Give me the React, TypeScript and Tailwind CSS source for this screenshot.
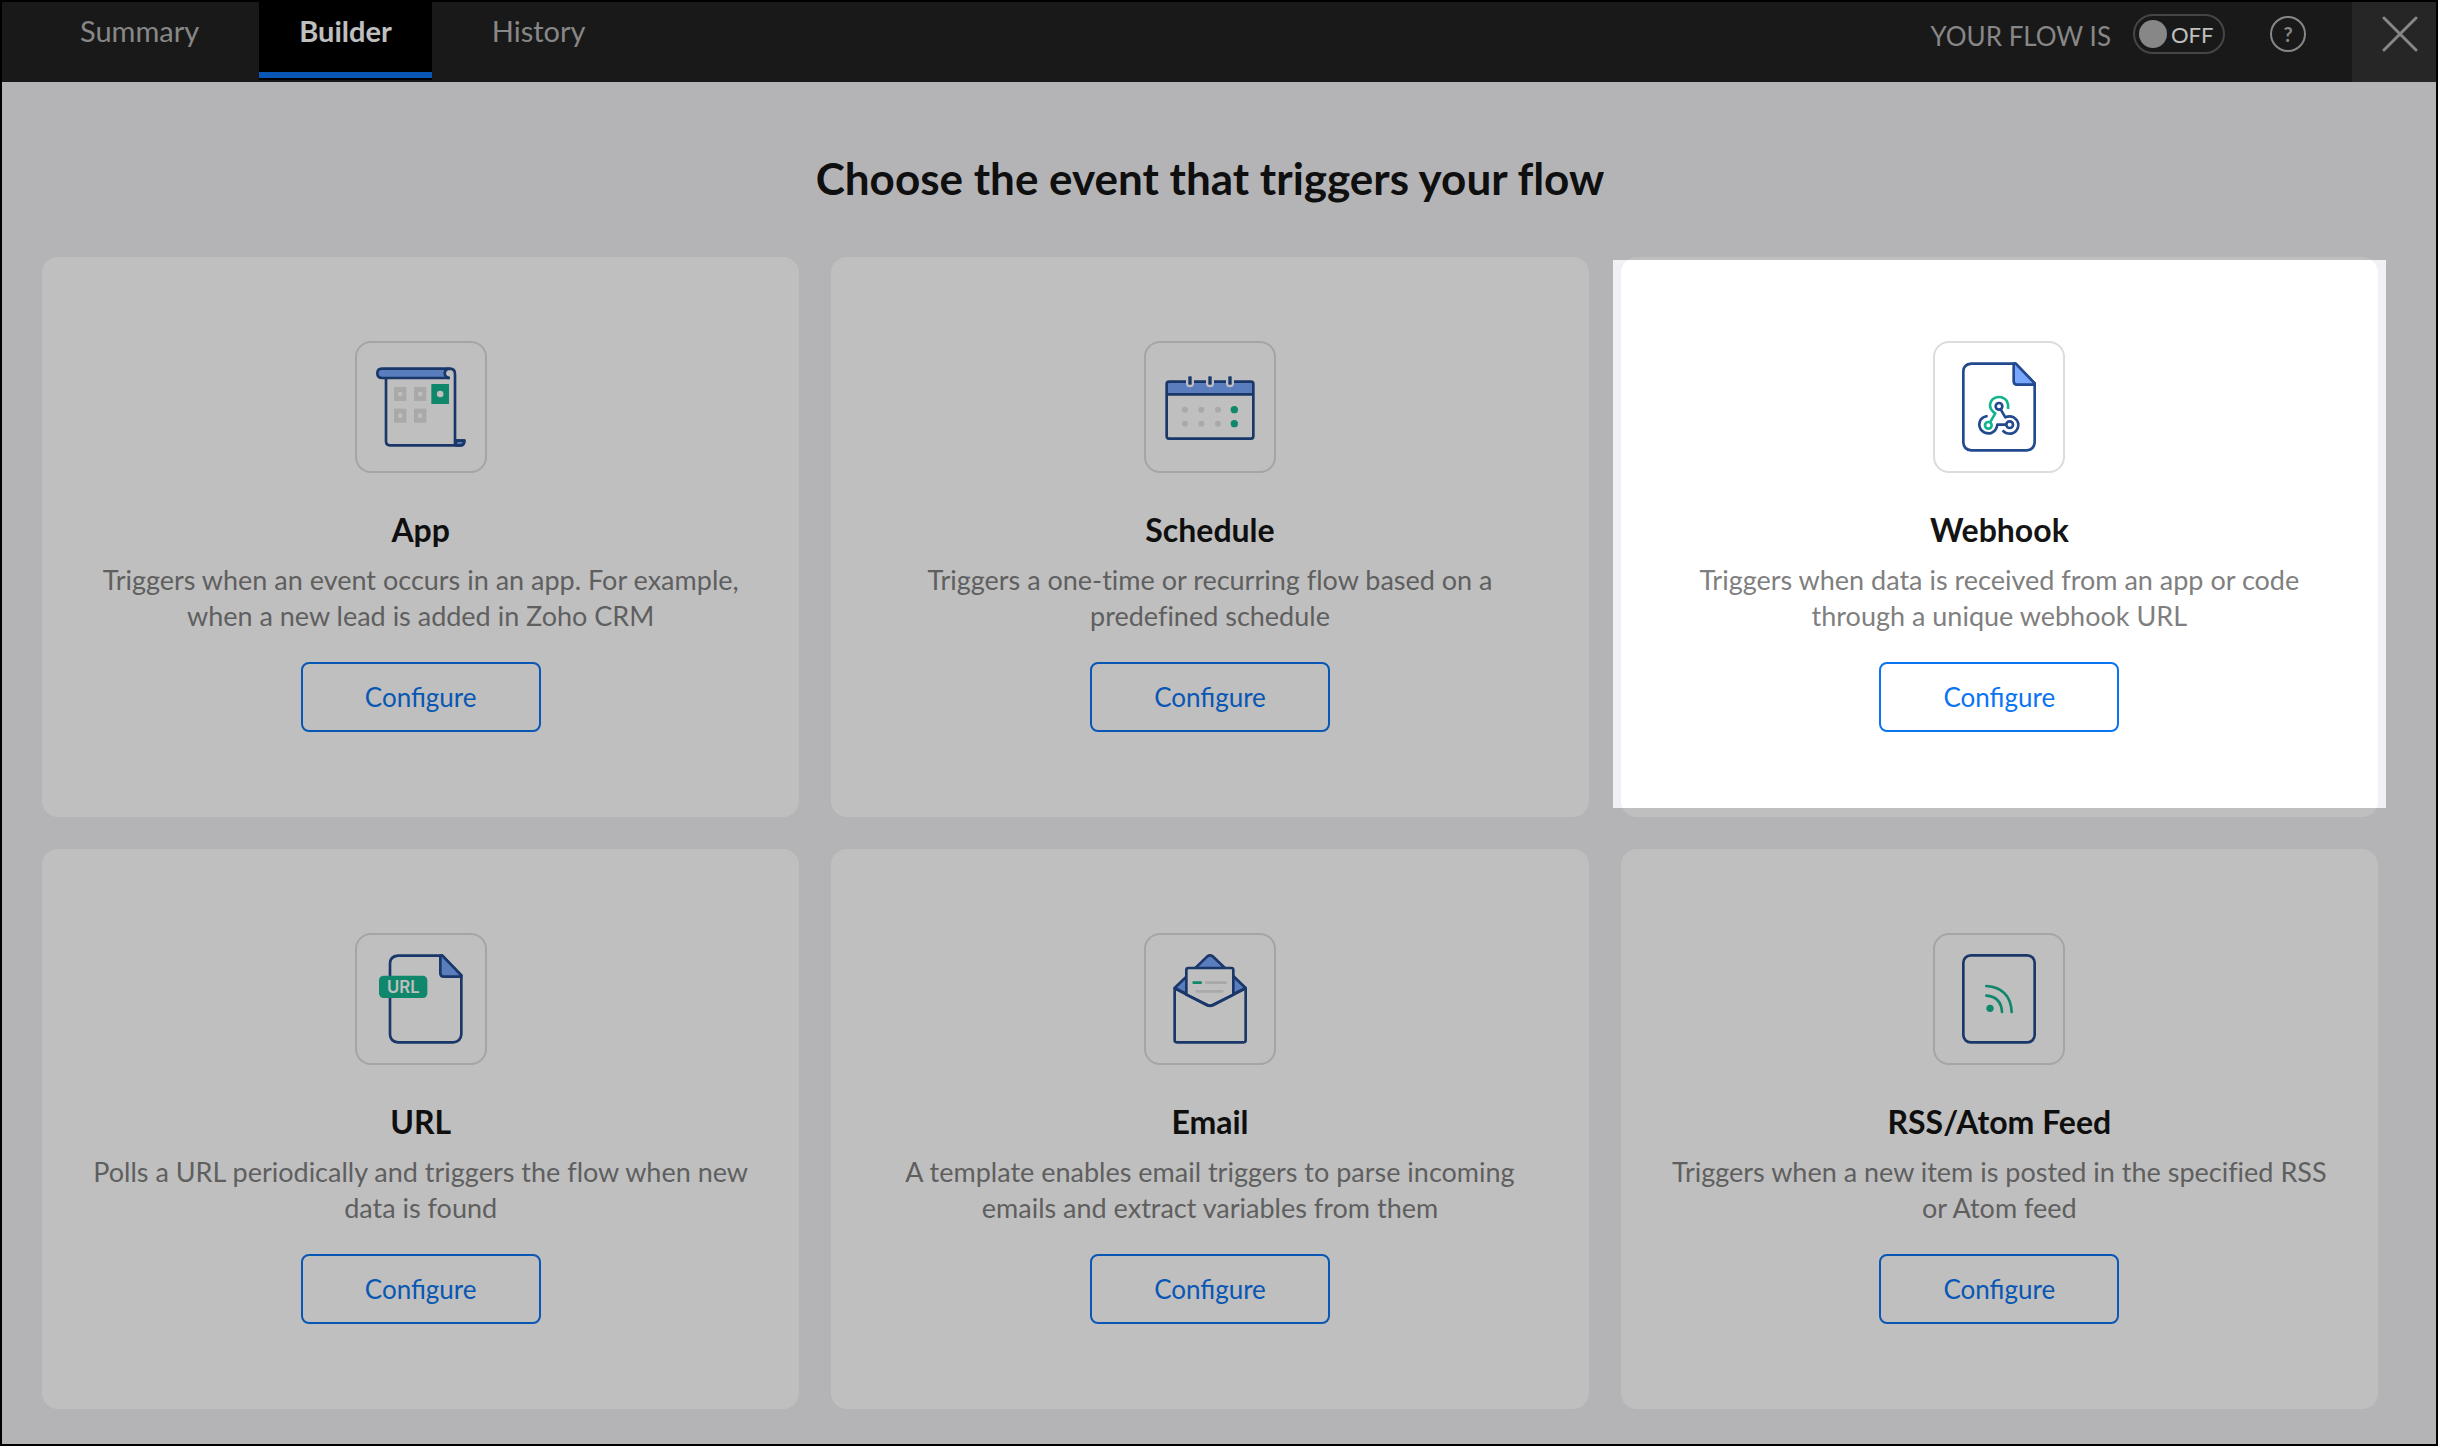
import type { ReactNode } from "react";

const NAVY = "#234a8e";
const BLUE = "#79a7fc";
const GREEN = "#14b48f";
const GREY = "#e2e2e2";

function AppIcon() {
  return (
    <svg viewBox="51 39 384 384" className="size-full" fill="none" stroke={NAVY} strokeWidth="8" strokeLinejoin="round" aria-hidden="true">
      <path d="M138 147V334Q138 346 150 346H362Q373 346 373 332H346" />
      <path d="M348 332H373Q372 346 360 346H348Z" fill={BLUE} />
      <path d="M328 116H126Q112 116 112 130Q112 144 126 144H326" fill={BLUE} />
      <path d="M326 144Q314 139 314 128Q316 116 330 116Q345 117 345 132V342" fill="#ffffff" stroke="none" />
      <path d="M326 148V143Q314 140 314 129Q316 116 330 116Q345 117 345 132V342" />
      <g stroke="none" fill={GREY}>
        <rect x="162" y="171" width="37" height="42" />
        <rect x="222" y="171" width="37" height="42" />
        <rect x="162" y="236" width="37" height="42" />
        <rect x="222" y="236" width="37" height="42" />
        <rect x="274" y="162" width="53" height="60" fill={GREEN} />
      </g>
      <g stroke="none" fill="#ffffff">
        <circle cx="180.500" cy="192" r="7" />
        <circle cx="240.500" cy="192" r="7" />
        <circle cx="180.500" cy="257" r="7" />
        <circle cx="240.500" cy="257" r="7" />
        <circle cx="300.500" cy="192" r="10" />
      </g>
    </svg>
  );
}

function ScheduleIcon() {
  return (
    <svg viewBox="48 39 384 384" className="size-full" fill="none" stroke={NAVY} strokeWidth="8" aria-hidden="true">
      <rect x="110" y="155" width="260" height="38" rx="6" fill={BLUE} stroke="none" />
      <rect x="110" y="155" width="260" height="171" rx="7" />
      <path d="M110 193H370" />
      {[180, 240, 300].map((x) => (
        <g key={x}>
          <path d={`M${x} 146V160`} stroke="#ffffff" strokeWidth="24" strokeLinecap="round" />
          <path d={`M${x} 139V164`} strokeWidth="10" />
        </g>
      ))}
      <g stroke="none" fill={GREY}>
        {[165, 214, 264].map((x) => (
          <g key={x}>
            <circle cx={x} cy="239" r="9" />
            <circle cx={x} cy="281" r="9" />
          </g>
        ))}
        <circle cx="313" cy="239" r="11" fill={GREEN} />
        <circle cx="313" cy="281" r="11" fill={GREEN} />
      </g>
    </svg>
  );
}

function WebhookIcon() {
  return (
    <svg viewBox="45 39 384 384" className="size-full" fill="none" stroke={NAVY} strokeWidth="8" strokeLinejoin="round" aria-hidden="true">
      <path d="M287 101H154Q130 103 130 125V337Q131 359 154 361H320Q342 359 344 337V160Z" />
      <path d="M281 101V154Q281 164 291 164H344V160L287 101Z" fill={BLUE} />
      <g strokeWidth="8">
        <circle cx="237" cy="229" r="10" />
        <circle cx="269" cy="284" r="10" />
        <path d="M242 238L256 262Q268 256 281 262Q296 271 295 287Q292 307 274 311Q257 312 248 301" />
        <path d="M259 284H232Q230 303 212 310Q193 312 182 298Q174 284 182 269Q190 259 203 258" />
        <g stroke={GREEN}>
          <circle cx="205" cy="286" r="10" />
          <path d="M210 277L226 250Q210 240 210 224Q213 204 234 201Q252 200 261 214Q266 224 264 237" />
        </g>
      </g>
    </svg>
  );
}

function UrlIcon() {
  return (
    <svg viewBox="51 45 384 384" className="size-full" fill="none" stroke={NAVY} strokeWidth="8" strokeLinejoin="round" aria-hidden="true">
      <path d="M307 107H174Q150 109 150 131V343Q151 365 174 367H340Q362 365 364 343V166Z" />
      <path d="M301 107V160Q301 170 311 170H364V166L307 107Z" fill={BLUE} />
      <rect x="117" y="167" width="145" height="67" rx="14" fill={GREEN} stroke="none" />
      <text x="190" y="219" textAnchor="middle" fontFamily="Inter, sans-serif" fontWeight="600" fontSize="50" fill="#ffffff" stroke="none">
        URL
      </text>
    </svg>
  );
}

function EmailIcon() {
  return (
    <svg viewBox="48 45 384 384" className="size-full" fill="none" stroke={NAVY} strokeWidth="8" strokeLinejoin="round" aria-hidden="true">
      <path d="M134 204L232 109Q240 103 248 109L347 204L240 257Z" fill={BLUE} />
      <path d="M169 224V150Q169 144 175 144H304Q310 144 310 150V224L248 255Q240 259 232 255Z" fill="#ffffff" />
      <path d="M134 205L230 255Q240 260 250 255L347 205V361Q347 367 341 367H140Q134 367 134 361Z" />
      <g strokeLinecap="round">
        <path d="M191 188H212" stroke={GREEN} />
        <path d="M229 188H287M200 214H277" stroke={GREY} />
      </g>
    </svg>
  );
}

function FeedIcon() {
  return (
    <svg viewBox="45 45 384 384" className="size-full" fill="none" stroke={NAVY} strokeWidth="8" aria-hidden="true">
      <rect x="130" y="106" width="214" height="261" rx="22" />
      <g stroke={GREEN} strokeLinecap="round">
        <path d="M199 227Q243 230 246 276" />
        <path d="M199 198Q271 203 275 276" />
      </g>
      <circle cx="210" cy="265" r="11" fill={GREEN} stroke="none" />
    </svg>
  );
}

type Trigger = { name: string; text: string; icon: ReactNode; spotlight?: boolean };

const triggers: Trigger[] = [
  { name: "App", text: "Triggers when an event occurs in an app. For example, when a new lead is added in Zoho CRM", icon: <AppIcon /> },
  { name: "Schedule", text: "Triggers a one-time or recurring flow based on a predefined schedule", icon: <ScheduleIcon /> },
  { name: "Webhook", text: "Triggers when data is received from an app or code through a unique webhook URL", icon: <WebhookIcon />, spotlight: true },
  { name: "URL", text: "Polls a URL periodically and triggers the flow when new data is found", icon: <UrlIcon /> },
  { name: "Email", text: "A template enables email triggers to parse incoming emails and extract variables from them", icon: <EmailIcon /> },
  { name: "RSS/Atom Feed", text: "Triggers when a new item is posted in the specified RSS or Atom feed", icon: <FeedIcon /> },
];

function Card({ name, text, icon, spotlight }: Trigger) {
  return (
    <section className="relative flex flex-col items-center rounded-2xl bg-white px-12 pt-[84px] pb-[85px] text-center">
      {/* Dims everything on the page outside this box */}
      {spotlight && (
        <div className="pointer-events-none absolute -inset-x-2 top-[3px] bottom-[9px] z-10 shadow-[0_0_0_3000px_rgba(0,0,0,0.25)]" />
      )}
      <div className="size-[132px] rounded-2xl border-2 border-[#dcdcdc]">{icon}</div>
      <h2 className="mt-[37px] text-[32px] leading-10 font-bold text-[#141414]">{name}</h2>
      <p className="mt-3 max-w-[660px] text-[27px] leading-9 text-[#7f7f7f] [font-variant-ligatures:none]">{text}</p>
      <button type="button" aria-label={`Configure ${name}`} className="mt-7 h-[70px] w-60 rounded-lg border-2 border-[#0b74f0] text-[26px] text-[#0b74f0]">
        Configure
      </button>
    </section>
  );
}

export default function App() {
  return (
    <div className="flex min-h-screen flex-col overflow-hidden border-2 border-black bg-[#f0f1f4] font-['Lato',sans-serif]">
      <header className="flex h-20 bg-[#222222]">
        <nav className="flex h-[78px] gap-5 pl-[38px] text-[29px] leading-[58px] text-[#b4b4b4]">
          <a href="#summary" className="px-10">Summary</a>
          <a href="#builder" aria-current="page" className="flex flex-col justify-between bg-black px-10 pb-0.5 font-bold text-white">
            Builder
            <span className="-mx-10 h-1.5 bg-[#0b74f0]" />
          </a>
          <a href="#history" className="px-10">History</a>
        </nav>
        <div className="ml-auto flex h-16 items-center text-[26px] text-[#b4b4b4]">
          <label htmlFor="flow-switch" className="pt-1">YOUR FLOW IS</label>
          <label className="ml-[22px] flex h-10 w-[92px] items-center rounded-full border-2 border-[#5c5c5c] pl-1">
            <input id="flow-switch" type="checkbox" role="switch" className="size-7 appearance-none rounded-full bg-[#b4b4b4]" />
            <span className="ml-1 text-[22px] text-white">OFF</span>
          </label>
          <button type="button" aria-label="Help" className="ml-[45px] flex size-9 items-center justify-center rounded-full border-2 border-[#b4b4b4] text-xl font-bold">
            ?
          </button>
        </div>
        <button type="button" aria-label="Close" className="ml-[46px] flex w-[84px] justify-end bg-[#333333] pt-3.5 pr-[18px]">
          <svg viewBox="0 0 36 36" className="size-9 text-[#b4b4b4]" fill="none" stroke="currentColor" strokeWidth="3" strokeLinecap="round" aria-hidden="true">
            <path d="M2 2L34 34M34 2L2 34" />
          </svg>
        </button>
      </header>
      <main className="flex-1 pr-[58px] pb-8 pl-10">
        <h1 className="pt-[68px] pb-[51px] text-center text-[44px] leading-[56px] font-bold text-[#141414] [font-variant-ligatures:none]">
          Choose the event that triggers your flow
        </h1>
        <div className="grid grid-cols-3 gap-8">
          {triggers.map((trigger) => (
            <Card key={trigger.name} {...trigger} />
          ))}
        </div>
      </main>
    </div>
  );
}
